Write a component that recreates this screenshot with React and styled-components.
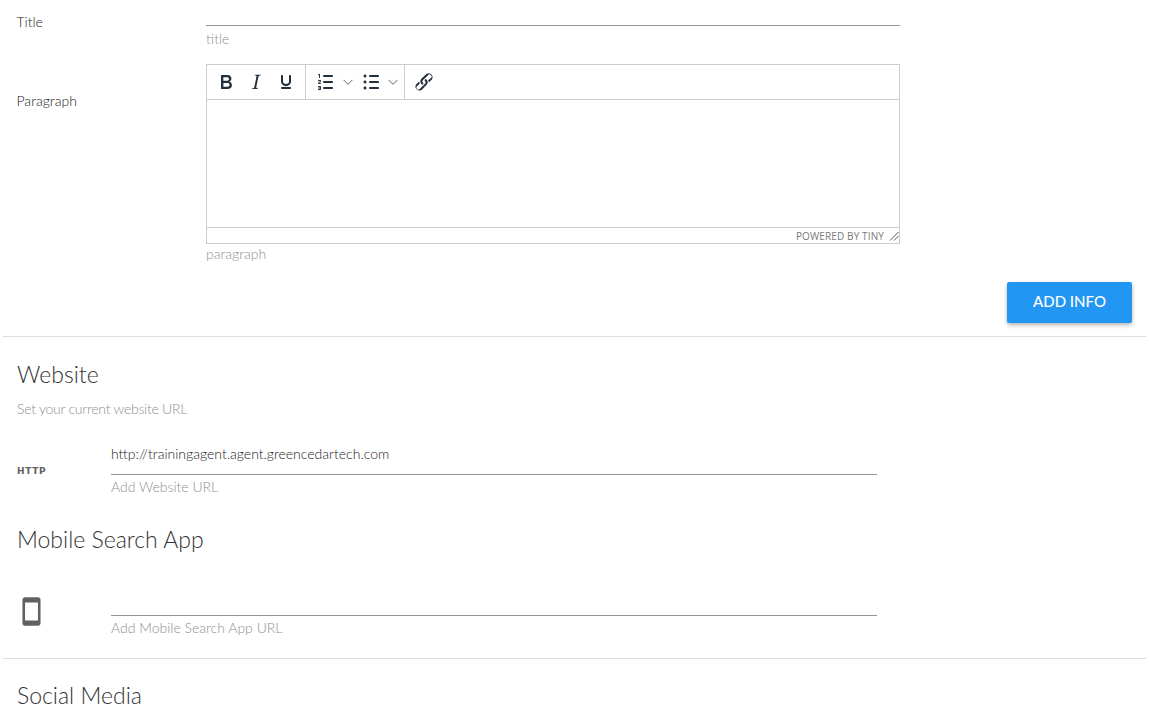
import React from "react";
import styled, { createGlobalStyle } from "styled-components";

const GlobalStyle = createGlobalStyle`
  html, body {
    margin: 0;
    height: 100%;
    overflow: hidden;
    background: #fff;
  }
  body {
    font-family: "Lato", "Open Sans", sans-serif;
    font-weight: 300;
    color: #222;
  }
`;

const paths = {
  bold: "M7.8 19c-.3 0-.5 0-.6-.2l-.2-.5V5.7c0-.2 0-.4.2-.5l.6-.2h5c1.5 0 2.7.3 3.5 1 .7.6 1.1 1.4 1.1 2.5a3 3 0 0 1-.6 1.9c-.4.6-1 1-1.6 1.2.4.1.9.3 1.3.6s.8.7 1 1.2c.3.4.4 1 .4 1.6 0 1.3-.4 2.3-1.3 3-.8.7-2.1 1-3.8 1H7.8zm5-8.3c.6 0 1.2-.1 1.6-.5.4-.3.6-.7.6-1.3 0-1.1-.8-1.7-2.3-1.7H9.3v3.5h3.4zm.5 6c.7 0 1.3-.1 1.7-.4.4-.4.6-.9.6-1.5s-.2-1-.7-1.4c-.4-.3-1-.4-2-.4H9.4v3.8h4z",
  italic: "M16.7 4.7l-.1.9h-.3c-.6 0-1 0-1.4.3-.3.3-.4.6-.5 1.1l-2.1 9.8v.6c0 .5.4.8 1.4.8h.2l-.2.8H8l.2-.8h.2c1.1 0 1.8-.5 2-1.5l2-9.8.1-.5c0-.6-.4-.8-1.4-.8h-.3l.2-.9h5.8z",
  underline: "M16 5c.6 0 1 .4 1 1v5.5a4 4 0 0 1-.4 1.8l-1 1.4a5.3 5.3 0 0 1-5.5 1 5 5 0 0 1-1.6-1c-.5-.4-.8-.9-1.1-1.4a4 4 0 0 1-.4-1.8V6c0-.6.4-1 1-1s1 .4 1 1v5.5c0 .3 0 .6.2 1l.6.7a3.3 3.3 0 0 0 2.2.8 3.4 3.4 0 0 0 2.2-.8c.3-.2.4-.5.6-.8l.2-.9V6c0-.6.4-1 1-1zM8 17h8c.6 0 1 .4 1 1s-.4 1-1 1H8a1 1 0 0 1-1-1c0-.6.4-1 1-1z",
  numlist: "M10 17h8c.6 0 1 .4 1 1s-.4 1-1 1h-8a1 1 0 0 1 0-2zm0-6h8c.6 0 1 .4 1 1s-.4 1-1 1h-8a1 1 0 0 1 0-2zm0-6h8c.6 0 1 .4 1 1s-.4 1-1 1h-8a1 1 0 1 1 0-2zM6 4v3.5c0 .3-.2.5-.5.5a.5.5 0 0 1-.5-.5V5h-.5a.5.5 0 0 1 0-1H6zm-1 8.8l.2.2h1.3c.3 0 .5.2.5.5s-.2.5-.5.5H4.9a1 1 0 0 1-.9-1V13c0-.4.3-.8.6-1l1.2-.4.2-.3a.2.2 0 0 0-.2-.2H4.5a.5.5 0 0 1-.5-.5c0-.3.2-.5.5-.5h1.6c.5 0 .9.4.9 1v.1c0 .4-.3.8-.6 1l-1.2.4-.2.3zM7 17v2c0 .6-.4 1-1 1H4.5a.5.5 0 0 1 0-1h1.2c.2 0 .3-.1.3-.3 0-.2-.1-.3-.3-.3H4.4a.4.4 0 1 1 0-.8h1.3c.2 0 .3-.1.3-.3 0-.2-.1-.3-.3-.3H4.5a.5.5 0 1 1 0-1H6c.6 0 1 .4 1 1z",
  bullist: "M11 5h8c.6 0 1 .4 1 1s-.4 1-1 1h-8a1 1 0 0 1 0-2zm0 6h8c.6 0 1 .4 1 1s-.4 1-1 1h-8a1 1 0 0 1 0-2zm0 6h8c.6 0 1 .4 1 1s-.4 1-1 1h-8a1 1 0 0 1 0-2zM4.5 6c0-.4.1-.8.4-1 .3-.4.7-.5 1.1-.5.4 0 .8.1 1 .4.4.3.5.7.5 1.1 0 .4-.1.8-.4 1-.3.4-.7.5-1.1.5-.4 0-.8-.1-1-.4-.4-.3-.5-.7-.5-1.1zm0 6c0-.4.1-.8.4-1 .3-.4.7-.5 1.1-.5.4 0 .8.1 1 .4.4.3.5.7.5 1.1 0 .4-.1.8-.4 1-.3.4-.7.5-1.1.5-.4 0-.8-.1-1-.4-.4-.3-.5-.7-.5-1.1zm0 6c0-.4.1-.8.4-1 .3-.4.7-.5 1.1-.5.4 0 .8.1 1 .4.4.3.5.7.5 1.1 0 .4-.1.8-.4 1-.3.4-.7.5-1.1.5-.4 0-.8-.1-1-.4-.4-.3-.5-.7-.5-1.1z",
  link: "M6.2 12.3a1 1 0 0 1 1.4 1.4l-2.1 2.1a2 2 0 1 0 2.7 2.7l4.8-4.8a2 2 0 0 0 0-2.8 1 1 0 1 1 1.4-1.4 4 4 0 0 1 0 5.6l-4.8 4.8a4 4 0 0 1-5.5-5.5l2.1-2.1zm11.6-.6a1 1 0 0 1-1.4-1.4l2.1-2a2 2 0 1 0-2.7-2.8L11 10a2 2 0 0 0 0 2.8 1 1 0 1 1-1.4 1.4 4 4 0 0 1 0-5.6L14.4 4a4 4 0 0 1 5.5 5.5l-2.1 2.1z",
};

const ToolIcon = ({ name }) => (
  <svg width="24" height="24" viewBox="0 0 24 24" fill="#222f3e">
    <path d={paths[name]} />
  </svg>
);

const Chevron = () => (
  <svg width="10" height="10" viewBox="0 0 10 10" fill="none" stroke="#5c6670" strokeWidth="1">
    <path d="M0.5 2.8L5 7.3L9.5 2.8" />
  </svg>
);

const PhoneIcon = () => (
  <svg width="31" height="31" viewBox="0 0 24 24" fill="#616161">
    <path d="M17 1.01L7 1c-1.1 0-2 .9-2 2v18c0 1.1.9 2 2 2h10c1.1 0 2-.9 2-2V3c0-1.1-.9-1.99-2-1.99zM17 19H7V5h10v14z" />
  </svg>
);

const ResizeHandle = () => (
  <svg width="10" height="10" viewBox="0 0 10 10" stroke="#555" strokeWidth="1" fill="none">
    <path d="M1 9.5L9.5 1M5 9.5L9.5 5" />
  </svg>
);

const Page = styled.div`
  width: 1150px;
  height: 711px;
  overflow: hidden;
`;

const FormRow = styled.div`
  display: grid;
  grid-template-columns: 189px 694px;
  padding-left: 17px;
`;

const RowLabel = styled.label`
  font-size: 14px;
  line-height: 20px;
  padding-top: ${(p) => p.$top}px;
  margin-left: -0.5px;
  color: #222;
`;

const LineInput = styled.div`
  height: ${(p) => p.$height}px;
  border-bottom: 1px solid #949494;
  font-size: 14px;
  line-height: 20px;
  color: #222;
`;

const Helper = styled.div`
  font-size: 14px;
  line-height: 18px;
  color: #8f8f8f;
  margin-top: ${(p) => p.$top || 4}px;
`;

const Editor = styled.div`
  height: 180px;
  border: 1px solid #ccc;
  box-sizing: border-box;
  display: flex;
  flex-direction: column;
  margin-top: 16px;
`;

const Toolbar = styled.div`
  height: 34px;
  flex: none;
  border-bottom: 1px solid #ccc;
  display: flex;
`;

const ToolGroup = styled.div`
  display: flex;
  align-items: center;
  padding: 0 4px;
  border-right: ${(p) => (p.$last ? "none" : "1px solid #ccc")};
`;

const ToolButton = styled.span`
  display: flex;
  align-items: center;
  justify-content: center;
  width: 30px;
  height: 34px;
`;

const MenuButton = styled.span`
  display: flex;
  align-items: center;
  gap: 5px;
  padding: 0 2px 0 4px;
  height: 34px;
`;

const EditArea = styled.div`
  flex: 1;
`;

const StatusBar = styled.div`
  height: 15px;
  flex: none;
  border-top: 1px solid #ccc;
  display: flex;
  align-items: center;
  justify-content: flex-end;
  gap: 5px;
  font-family: "Open Sans", sans-serif;
  font-weight: 400;
  font-size: 10px;
  letter-spacing: 0.12px;
  color: #7a7a7a;
`;

const ButtonRow = styled.div`
  display: flex;
  justify-content: flex-end;
  padding: 19px 18px 0 0;
`;

const AddButton = styled.button`
  width: 125px;
  height: 41px;
  border: none;
  border-radius: 2px;
  padding: 0 0 3px;
  background: #2196f3;
  color: #fff;
  font-family: "Lato", sans-serif;
  font-weight: 500;
  font-size: 15px;
  box-shadow: 0 2px 4px rgba(0, 0, 0, 0.3);
`;

const Divider = styled.hr`
  margin: ${(p) => p.$top}px 4px 0 3px;
  border: none;
  border-top: 1px solid #ddd;
`;

const SectionTitle = styled.h2`
  margin: ${(p) => p.$top}px 0 0 17px;
  font-size: 23px;
  line-height: 30px;
  font-weight: 300;
  color: #333;
`;

const SectionHint = styled.p`
  margin: 10px 0 0 17px;
  font-size: 14px;
  line-height: 20px;
  letter-spacing: -0.25px;
  color: #8f8f8f;
`;

const LinkRow = styled.div`
  display: grid;
  grid-template-columns: 94px 766px;
  padding-left: 17px;
  margin-top: ${(p) => p.$top}px;
`;

const LinkIcon = styled.div`
  display: flex;
  align-items: flex-start;
  padding-top: ${(p) => p.$top}px;
`;

const HttpTag = styled.span`
  font-family: "DejaVu Sans", sans-serif;
  font-weight: 700;
  font-size: 9px;
  line-height: 12px;
  letter-spacing: 0.65px;
  color: #616161;
`;

const PhoneWrap = styled.span`
  display: flex;
  margin-left: -1px;
`;

export default function App() {
  return (
    <Page>
      <GlobalStyle />
      <FormRow>
        <RowLabel $top={12}>Title</RowLabel>
        <div>
          <LineInput $height={25} />
          <Helper>title</Helper>
        </div>
      </FormRow>
      <FormRow>
        <RowLabel $top={43}>Paragraph</RowLabel>
        <div>
          <Editor>
            <Toolbar>
              <ToolGroup>
                <ToolButton><ToolIcon name="bold" /></ToolButton>
                <ToolButton><ToolIcon name="italic" /></ToolButton>
                <ToolButton><ToolIcon name="underline" /></ToolButton>
              </ToolGroup>
              <ToolGroup>
                <MenuButton><ToolIcon name="numlist" /><Chevron /></MenuButton>
                <MenuButton><ToolIcon name="bullist" /><Chevron /></MenuButton>
              </ToolGroup>
              <ToolGroup $last>
                <ToolButton><ToolIcon name="link" /></ToolButton>
              </ToolGroup>
            </Toolbar>
            <EditArea />
            <StatusBar>
              POWERED BY TINY
              <ResizeHandle />
            </StatusBar>
          </Editor>
          <Helper $top={1}>paragraph</Helper>
        </div>
      </FormRow>
      <ButtonRow>
        <AddButton>ADD INFO</AddButton>
      </ButtonRow>
      <Divider $top={13} />
      <SectionTitle $top={22}>Website</SectionTitle>
      <SectionHint>Set your current website URL</SectionHint>
      <LinkRow $top={25}>
        <LinkIcon $top={21}><HttpTag>HTTP</HttpTag></LinkIcon>
        <div>
          <LineInput $height={30}>http://trainingagent.agent.greencedartech.com</LineInput>
          <Helper $top={3}>Add Website URL</Helper>
        </div>
      </LinkRow>
      <SectionTitle $top={28}>Mobile Search App</SectionTitle>
      <LinkRow $top={20}>
        <LinkIcon $top={22}><PhoneWrap><PhoneIcon /></PhoneWrap></LinkIcon>
        <div>
          <LineInput $height={41} />
          <Helper $top={3}>Add Mobile Search App URL</Helper>
        </div>
      </LinkRow>
      <Divider $top={21} />
      <SectionTitle $top={21}>Social Media</SectionTitle>
    </Page>
  );
}
